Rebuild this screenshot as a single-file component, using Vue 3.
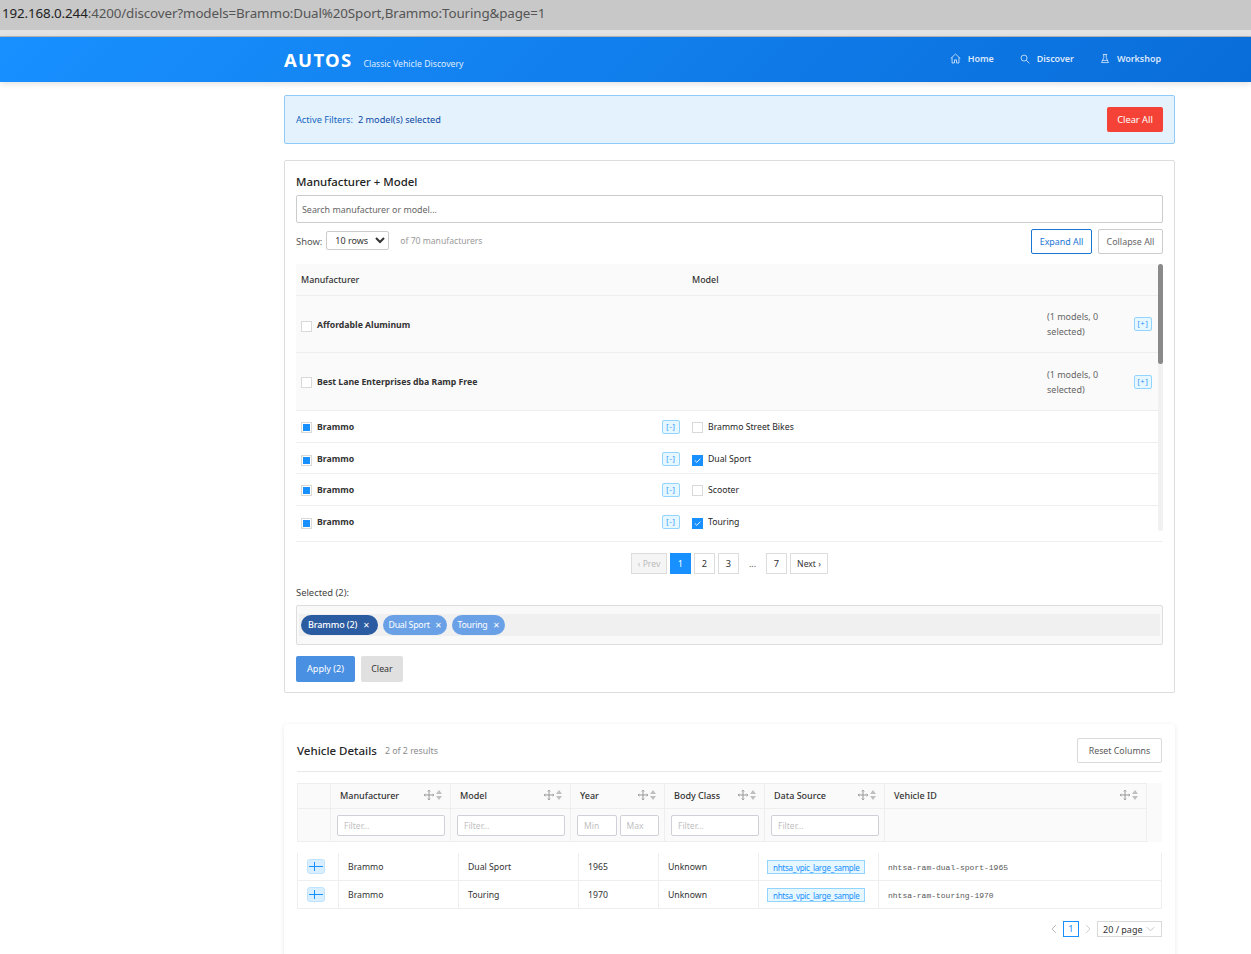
<script setup>
const rows = [
  { maker: 'Affordable Aluminum', group: true, tall: 57, nudge: true },
  { maker: 'Best Lane Enterprises dba Ramp Free', group: true, tall: 58 },
  { maker: 'Brammo', model: 'Brammo Street Bikes', checked: false, tall: 32 },
  { maker: 'Brammo', model: 'Dual Sport', checked: true, tall: 31, nudge: true },
  { maker: 'Brammo', model: 'Scooter', checked: false, tall: 32 },
  { maker: 'Brammo', model: 'Touring', checked: true, tall: 36, last: true },
]
const pages = ['1', '2', '3']
const columns = [
  { name: 'Manufacturer', filter: 'text' },
  { name: 'Model', filter: 'text' },
  { name: 'Year', filter: 'range' },
  { name: 'Body Class', filter: 'text' },
  { name: 'Data Source', filter: 'text' },
  { name: 'Vehicle ID', filter: 'none' },
]
const vehicles = [
  { model: 'Dual Sport', year: 1965, id: 'nhtsa-ram-dual-sport-1965' },
  { model: 'Touring', year: 1970, id: 'nhtsa-ram-touring-1970' },
]
</script>

<template>
  <div class="app">
    <div class="address"><span class="host">192.168.0.244</span>:4200/discover?models=Brammo:Dual%20Sport,Brammo:Touring&amp;page=1</div>
    <div class="address-gap"></div>

    <header class="header">
      <div class="header-inner">
        <span class="logo">AUTOS</span>
        <span class="tagline">Classic Vehicle Discovery</span>
        <nav class="nav">
          <a class="nav-item">
            <svg viewBox="0 0 16 16" width="11" height="11" fill="none" stroke="currentColor" stroke-width="1.2"><path d="M1 8 8 1.5 15 8M3 6.5V14.5H6.5V10H9.5V14.5H13V6.5" /></svg>
            Home
          </a>
          <a class="nav-item">
            <svg viewBox="0 0 16 16" width="10" height="10" fill="none" stroke="currentColor" stroke-width="1.3"><circle cx="6.5" cy="6.5" r="4.8" /><path d="M10 10 15 15" /></svg>
            Discover
          </a>
          <a class="nav-item">
            <svg viewBox="0 0 16 16" width="10" height="11" fill="none" stroke="currentColor" stroke-width="1.3"><path d="M4.5 1.5H11.5M6 1.5V6.5L2.5 14.5H13.5L10 6.5V1.5M4 11H12" /></svg>
            Workshop
          </a>
        </nav>
      </div>
    </header>

    <main class="main">
      <section class="active-filters">
        <span class="af-label">Active Filters:</span>
        <span class="af-value">2 model(s) selected</span>
        <button class="clear-all">Clear All</button>
      </section>

      <section class="picker">
        <h3 class="picker-title">Manufacturer + Model</h3>
        <input class="search" placeholder="Search manufacturer or model..." />

        <div class="show-row">
          <label class="show-label">Show:</label>
          <select class="rows-select"><option>10 rows</option></select>
          <span class="of-count">of 70 manufacturers</span>
          <button class="ghost primary">Expand All</button>
          <button class="ghost">Collapse All</button>
        </div>

        <div class="tree">
          <div class="tree-head">
            <span class="col-maker">Manufacturer</span>
            <span class="col-model">Model</span>
          </div>
          <div
            v-for="row in rows"
            :key="row.maker + row.model"
            class="tree-row"
            :class="{ group: row.group, nudge: row.nudge, last: row.last }"
            :style="{ height: row.tall + 'px' }"
          >
            <div class="col-maker maker-cell">
              <span class="box" :class="{ partial: !row.group }"></span>
              <strong>{{ row.maker }}</strong>
              <span v-if="!row.group" class="toggle minus">[-]</span>
            </div>
            <div v-if="!row.group" class="col-model model-cell">
              <span class="box" :class="{ checked: row.checked }">
                <svg v-if="row.checked" viewBox="0 0 10 10" width="10" height="10" fill="none" stroke="#fff" stroke-width="1"><path d="M2 5.5 4.2 7.6 8.2 3.6" /></svg>
              </span>
              {{ row.model }}
            </div>
            <div v-else class="group-end">
              <span class="group-count">(1 models, 0 selected)</span>
              <span class="toggle">[+]</span>
            </div>
          </div>
          <div class="scrollbar"><div class="thumb"></div></div>
        </div>

        <div class="pager">
          <button class="page prev" disabled>‹ Prev</button>
          <button v-for="(p, i) in pages" :key="p" class="page" :class="{ current: i === 0 }">{{ p }}</button>
          <span class="dots">...</span>
          <button class="page">7</button>
          <button class="page next">Next ›</button>
        </div>

        <div class="selected-label">Selected (2):</div>
        <div class="selected-box">
          <div class="chip-band">
            <span class="chip dark">Brammo (2) <i>✕</i></span>
            <span class="chip">Dual Sport <i>✕</i></span>
            <span class="chip">Touring <i>✕</i></span>
          </div>
        </div>

        <div class="actions">
          <button class="apply">Apply (2)</button>
          <button class="clear">Clear</button>
        </div>
      </section>

      <section class="details">
        <div class="details-head">
          <h3 class="details-title">Vehicle Details</h3>
          <span class="details-count">2 of 2 results</span>
          <button class="reset">Reset Columns</button>
        </div>

        <div class="grid-head">
          <div class="head-row titles">
            <div class="head-cell first"></div>
            <div v-for="col in columns" :key="col.name" class="head-cell">
              <span class="head-name">{{ col.name }}</span>
              <svg class="move" viewBox="0 0 10 10" width="10" height="10" fill="none" stroke="#999" stroke-width="1"><path d="M0 5H10M5 0V10M3.8 1.4 5 .2 6.2 1.4M3.8 8.6 5 9.8 6.2 8.6M1.4 3.8.2 5 1.4 6.2M8.6 3.8 9.8 5 8.6 6.2" /></svg>
              <svg class="sort" viewBox="0 0 6 10" width="6" height="10" fill="#bfbfbf"><path d="M3 0 6 4H0ZM3 10 0 6H6Z" /></svg>
            </div>
            <div class="head-rest"></div>
          </div>
          <div class="head-row filters">
            <div class="head-cell first"></div>
            <div v-for="col in columns" :key="col.name" class="head-cell filter-cell">
              <input v-if="col.filter === 'text'" class="filter" placeholder="Filter..." />
              <template v-else-if="col.filter === 'range'">
                <input class="filter" placeholder="Min" />
                <input class="filter" placeholder="Max" />
              </template>
            </div>
            <div class="head-rest"></div>
          </div>
        </div>

        <div class="grid-body">
          <div v-for="v in vehicles" :key="v.id" class="body-row">
            <div class="body-cell expand-cell">
              <span class="expander"><svg viewBox="0 0 18 15" width="18" height="15" fill="none" stroke="#1890ff" stroke-width="1"><path d="M2 7.5H16M7.5 3V12" /></svg></span>
            </div>
            <div class="body-cell">Brammo</div>
            <div class="body-cell">{{ v.model }}</div>
            <div class="body-cell">{{ v.year }}</div>
            <div class="body-cell">Unknown</div>
            <div class="body-cell tag-cell"><span class="tag">nhtsa_vpic_large_sample</span></div>
            <div class="body-cell vid">{{ v.id }}</div>
          </div>
        </div>

        <div class="grid-pager">
          <svg viewBox="0 0 8 10" width="8" height="10" fill="none" stroke="#bfbfbf"><path d="M6 1 2 5 6 9" /></svg>
          <span class="grid-page">1</span>
          <svg viewBox="0 0 8 10" width="8" height="10" fill="none" stroke="#d0d0d0"><path d="M2 1 6 5 2 9" /></svg>
          <span class="page-size">20 / page
            <svg viewBox="0 0 10 6" width="9" height="6" fill="none" stroke="#bfbfbf"><path d="M1 1 5 5 9 1" /></svg>
          </span>
        </div>
      </section>
    </main>
  </div>
</template>

<style scoped>
.app {
  height: 954px;
  overflow: hidden;
  background: #fff;
  color: #262626;
  font-family: 'Noto Sans', sans-serif;
  font-size: 9px;
}
button,
input,
select {
  font-family: inherit;
}
.address {
  height: 30px;
  line-height: 26px;
  padding-left: 2px;
  background: #c8c8c8;
  color: #555;
  font-size: 13.4px;
  letter-spacing: -0.13px;
  white-space: nowrap;
}
.host {
  color: #222;
}
.address-gap {
  height: 7px;
  background: #e2e2e2;
  border-bottom: 1px solid #b5b5b5;
  box-sizing: border-box;
}
.header {
  height: 45px;
  background: linear-gradient(135deg, #1890ff, #096dd9);
  box-shadow: 0 2px 6px rgba(0, 0, 0, 0.12);
  color: #fff;
}
.header-inner {
  width: 877px;
  margin-left: 284px;
  height: 100%;
  display: flex;
  align-items: center;
}
.logo {
  font-size: 18.5px;
  font-weight: 700;
  letter-spacing: 1.3px;
  margin-right: 11px;
}
.tagline {
  font-size: 8.7px;
  opacity: 0.85;
  margin-top: 9px;
}
.nav {
  margin-left: auto;
  display: flex;
  gap: 26px;
  margin-top: -2px;
}
.nav-item {
  display: flex;
  align-items: center;
  gap: 7px;
  font-weight: 600;
  font-size: 9px;
  letter-spacing: -0.05px;
  color: rgba(255, 255, 255, 0.85);
}
.main {
  width: 891px;
  margin-left: 284px;
}
.active-filters {
  margin-top: 13px;
  height: 49px;
  box-sizing: border-box;
  display: flex;
  align-items: center;
  padding: 0 11px;
  background: #e3f2fd;
  border: 1px solid #90caf9;
  border-radius: 2px;
  color: #1565c0;
  font-size: 9.2px;
}
.af-value {
  margin-left: 5px;
  color: #0d47a1;
}
.clear-all {
  margin-left: auto;
  width: 56px;
  height: 25px;
  padding: 0;
  border: none;
  border-radius: 2px;
  background: #f44336;
  color: #fff;
  font-size: 9.3px;
}
.picker {
  margin-top: 16px;
  height: 533px;
  box-sizing: border-box;
  padding: 12px 11px;
  border: 1px solid #ddd;
  border-radius: 2px;
}
.picker-title {
  margin: 0 0 6px;
  height: 16px;
  line-height: 18px;
  font-size: 11.4px;
  font-weight: 500;
  color: #222;
}
.search {
  display: block;
  width: 100%;
  height: 28px;
  box-sizing: border-box;
  padding: 0 5px;
  border: 1px solid #ccc;
  border-radius: 2px;
  font-size: 8.9px;
}
.search::placeholder {
  color: #666;
}
.show-row {
  display: flex;
  align-items: center;
  height: 24px;
  margin: 6px 0 11px;
}
.show-label {
  color: #555;
  font-size: 9.4px;
  margin-right: 4px;
}
.rows-select {
  width: 63px;
  height: 19px;
  padding: 0 4px;
  margin-top: -1px;
  border: 1px solid #ccc;
  border-radius: 2px;
  background: #fff;
  font-size: 9px;
  color: #333;
}
.of-count {
  margin-left: 11px;
  color: #999;
  font-size: 8.6px;
}
.ghost {
  width: 65px;
  height: 25px;
  padding: 0;
  margin-left: 6px;
  background: #fff;
  border: 1px solid #ccc;
  border-radius: 2px;
  color: #666;
  font-size: 8.9px;
}
.ghost.primary {
  width: 61px;
  margin-left: auto;
  border-color: #1976d2;
  color: #1976d2;
}
.tree {
  position: relative;
  height: 278px;
  border-bottom: 1px solid #eee;
  box-sizing: border-box;
  overflow: hidden;
}
.tree-head,
.tree-row {
  display: flex;
  box-sizing: border-box;
  border-bottom: 1px solid #eee;
  align-items: center;
}
.tree-head {
  height: 32px;
  background: #fafafa;
  font-weight: 500;
  font-size: 8.9px;
  color: #333;
}
.tree-row.group {
  background: #fafafa;
}
.tree-row.last {
  border-bottom: none;
  padding-bottom: 4px;
}
.nudge .maker-cell,
.nudge .model-cell {
  padding-top: 2px;
}
.col-maker {
  flex: 0 0 390px;
  box-sizing: border-box;
  padding: 0 6px 0 5px;
}
.col-model {
  flex: 1;
  padding: 0 6px;
}
.maker-cell,
.model-cell {
  display: flex;
  align-items: center;
  font-size: 8.7px;
}
.maker-cell strong {
  font-weight: 700;
  color: #333;
}
.box {
  flex: none;
  width: 11px;
  height: 11px;
  box-sizing: border-box;
  margin: 2px 5px 0 0;
  border: 1px solid #d9d9d9;
  background: #fff;
  display: inline-flex;
  align-items: center;
  justify-content: center;
}
.box.partial::after {
  content: '';
  width: 7px;
  height: 7px;
  background: #1890ff;
}
.box.checked {
  background: #1890ff;
  border-color: #1890ff;
}
.toggle {
  flex: none;
  width: 18px;
  height: 14px;
  box-sizing: border-box;
  border: 1px solid #91d5ff;
  border-radius: 2px;
  background: #e6f7ff;
  color: #1890ff;
  font-size: 7px;
  letter-spacing: 0.8px;
  line-height: 12px;
  text-align: center;
}
.minus {
  margin-left: auto;
}
.group-end {
  flex: 1;
  display: flex;
  align-items: center;
  padding-right: 11px;
}
.group-count {
  width: 75px;
  margin-left: auto;
  margin-right: 12px;
  color: #666;
  font-size: 9px;
  line-height: 15px;
}
.scrollbar {
  position: absolute;
  top: 0;
  right: 0;
  width: 5px;
  height: 267px;
  background: #f1f1f1;
  border-radius: 3px;
}
.thumb {
  height: 100px;
  background: #8a8a8a;
  border-radius: 3px;
}
.pager {
  display: flex;
  justify-content: center;
  align-items: center;
  gap: 3px;
  margin-top: 11px;
  height: 21px;
}
.page {
  width: 21px;
  height: 21px;
  padding: 0;
  background: #fff;
  border: 1px solid #ddd;
  color: #333;
  font-size: 9.2px;
}
.page.prev {
  width: 36px;
  font-size: 8.6px;
}
.page.next {
  width: 38px;
  font-size: 8.6px;
}
.page:disabled {
  background: #f5f5f5;
  color: #bbb;
}
.page.current {
  background: #1890ff;
  border-color: #1890ff;
  color: #fff;
}
.dots {
  width: 21px;
  text-align: center;
  color: #555;
}
.selected-label {
  margin-top: 11px;
  height: 15px;
  line-height: 15px;
  font-size: 9.4px;
  color: #444;
}
.selected-box {
  margin-top: 5px;
  height: 40px;
  box-sizing: border-box;
  padding: 8px 2px;
  background: #f9f9f9;
  border: 1px solid #ddd;
  border-radius: 2px;
}
.chip-band {
  height: 22px;
  display: flex;
  align-items: center;
  gap: 5px;
  padding-left: 2px;
  background: #f0f0f0;
}
.chip {
  height: 20px;
  line-height: 20px;
  padding: 0 6px 0 5px;
  border-radius: 10px;
  background: #6aa1e6;
  color: #fff;
  font-size: 8.8px;
  letter-spacing: -0.25px;
  white-space: nowrap;
}
.chip.dark {
  background: #2b5ba0;
  padding: 0 9px 0 7px;
  font-size: 9px;
  font-weight: 500;
  letter-spacing: -0.1px;
}
.chip i {
  font-style: normal;
  font-size: 7.5px;
  margin-left: 3px;
}
.actions {
  display: flex;
  gap: 6px;
  margin-top: 11px;
}
.apply,
.clear {
  height: 26px;
  padding: 0 0 1px;
  border: none;
  border-radius: 2px;
  font-size: 9.1px;
}
.apply {
  width: 59px;
  background: #4a90e2;
  color: #fff;
}
.clear {
  width: 42px;
  background: #e0e0e0;
  color: #333;
  font-size: 8.8px;
}
.details {
  margin-top: 31px;
  height: 300px;
  box-sizing: border-box;
  padding: 14px 13px;
  border-radius: 4px;
  box-shadow: 0 1px 4px rgba(0, 0, 0, 0.1);
}
.details-head {
  display: flex;
  align-items: center;
  padding-bottom: 8px;
  height: 25px;
  border-bottom: 1px solid #e8e8e8;
  margin-bottom: 11px;
}
.details-title {
  margin: 0;
  font-size: 11.5px;
  font-weight: 500;
  color: #262626;
}
.details-count {
  margin-left: 8px;
  color: #8c8c8c;
  font-size: 8.8px;
  margin-top: 1px;
}
.reset {
  margin-left: auto;
  width: 85px;
  height: 25px;
  padding: 0;
  background: #fff;
  border: 1px solid #d9d9d9;
  border-radius: 2px;
  color: #595959;
  font-size: 8.8px;
}
.grid-head {
  background: #fafafa;
  font-size: 9px;
}
.head-row {
  display: grid;
  grid-template-columns: 34px 120px 120px 94px 100px 120px 262px 15px;
  height: 25px;
  box-sizing: border-box;
  color: #333;
  font-weight: 500;
}
.head-row.filters {
  height: 34px;
}
.titles .head-cell {
  padding-bottom: 2px;
}
.head-cell {
  display: flex;
  align-items: center;
  padding: 0 8px 0 9px;
  box-sizing: border-box;
  border: 1px solid #eee;
  border-width: 1px 1px 0 0;
}
.head-row.filters .head-cell {
  border-bottom-width: 1px;
}
.head-cell.first {
  border-left-width: 1px;
}
.head-rest {
  background: #fafafa;
}
.head-name {
  flex: 1;
}
.move {
  margin-right: 2px;
}
.filter-cell {
  padding: 0 5px 0 6px;
  gap: 3px;
}
.filter {
  width: 100%;
  min-width: 0;
  height: 21px;
  box-sizing: border-box;
  padding: 0 6px;
  border: 1px solid #d0d0d8;
  border-radius: 2px;
  font-size: 8.5px;
}
.filter::placeholder {
  color: #bfbfbf;
}
.grid-body {
  margin-top: 11px;
}
.body-row {
  display: grid;
  grid-template-columns: 41px 120px 120px 80px 100px 120px 1fr;
  height: 28px;
  box-sizing: border-box;
  border: 1px solid #eee;
  border-width: 0 1px 1px 1px;
}
.body-cell {
  display: flex;
  align-items: center;
  padding: 0 9px;
  border-right: 1px solid #eee;
  font-size: 8.7px;
  color: #333;
}
.body-cell:last-child {
  border-right: none;
}
.expand-cell {
  padding: 0 0 0 9px;
}
.expander {
  width: 18px;
  height: 15px;
  background: #d9efff;
  border: 1px solid #bfe3ff;
  box-sizing: border-box;
  border-radius: 3px;
  display: flex;
}
.expander svg {
  margin: -1px;
  flex: none;
}
.tag-cell {
  padding: 0 7px 0 8px;
}
.tag {
  height: 14px;
  line-height: 13px;
  padding: 0 5px;
  box-sizing: border-box;
  border: 1px solid #91d5ff;
  background: #e6f7ff;
  color: #1890ff;
  font-size: 8px;
  letter-spacing: -0.29px;
  white-space: nowrap;
}
.vid {
  font-family: 'Liberation Mono', monospace;
  font-size: 8px;
  color: #595959;
  padding-top: 1px;
}
.grid-pager {
  display: flex;
  align-items: center;
  justify-content: flex-end;
  gap: 4px;
  margin-top: 12px;
}
.grid-page {
  width: 16px;
  height: 16px;
  box-sizing: border-box;
  margin: 0 1px;
  border: 1px solid #1890ff;
  color: #1890ff;
  text-align: center;
  line-height: 14px;
  font-size: 9.2px;
}
.page-size {
  display: flex;
  align-items: center;
  justify-content: space-between;
  width: 65px;
  height: 16px;
  box-sizing: border-box;
  margin-left: 1px;
  padding: 0 6px 0 5px;
  border: 1px solid #d9d9d9;
  font-size: 9px;
  color: #333;
}
</style>
